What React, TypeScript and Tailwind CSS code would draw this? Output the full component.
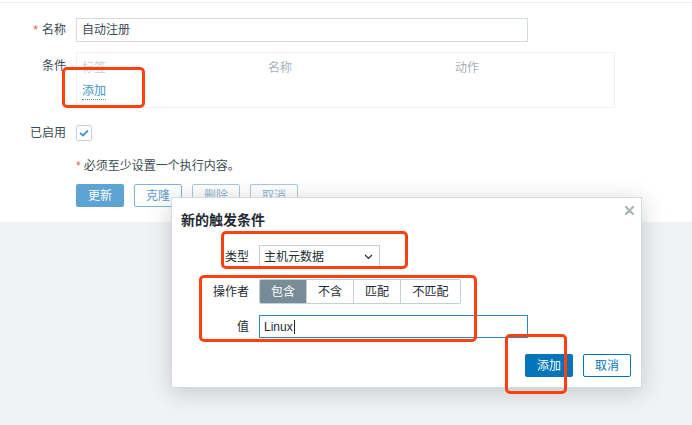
import React from "react";

const font = { fontFamily: '"Liberation Sans", "Noto Sans CJK SC", sans-serif' };

function Mark({ className }: { className: string }) {
  return <div className={`pointer-events-none absolute rounded-[5px] border-[3px] border-[#fe3f0f] ${className}`} />;
}

function Segment({ label, active, wide }: { label: string; active?: boolean; wide?: boolean }) {
  return (
    <div
      className={`flex h-[23px] items-center justify-center border-r border-[#c5d0d6] last:border-r-0 ${wide ? "w-[59px]" : "w-[47px]"} ${
        active ? "bg-[#768d99] text-white" : "bg-white text-[#1f2c33]"
      }`}
    >
      {label}
    </div>
  );
}

function NewConditionDialog() {
  return (
    <div className="absolute left-[171px] top-[197px] h-[191px] w-[471px] border border-[#d4dade] bg-white shadow-[0_4px_22px_rgba(40,50,60,0.22)]">
      <div className="flex items-start justify-between pl-[9px] pr-[7px] pt-[13px]">
        <h4 className="text-[14px] font-semibold leading-[18px] text-[#1f2c33]">新的触发条件</h4>
        <svg width="9" height="9" viewBox="0 0 9 9" className="mt-[-5px]">
          <path d="M1 1L8 8M8 1L1 8" stroke="#a9b4ba" strokeWidth="2.2" strokeLinecap="round" />
        </svg>
      </div>

      <div className="mt-[16px] grid grid-cols-[77px_1fr] items-center gap-x-[10px] gap-y-[11px] text-[12px] text-[#1f2c33]">
        <span className="text-right">类型</span>
        <div className="flex h-[23px] w-[121px] items-center justify-between border border-[#c5d0d6] bg-white pl-[4px] pr-[6px]">
          <span>主机元数据</span>
          <svg width="9" height="6" viewBox="0 0 9 6">
            <path d="M1 1L4.5 4.5L8 1" stroke="#1f2c33" strokeWidth="1.2" fill="none" />
          </svg>
        </div>

        <span className="text-right">操作者</span>
        <div className="flex w-fit overflow-hidden rounded-[2px] border border-[#c5d0d6]">
          <Segment label="包含" active />
          <Segment label="不含" />
          <Segment label="匹配" />
          <Segment label="不匹配" wide />
        </div>

        <span className="text-right">值</span>
        <div className="flex h-[23px] w-[269px] items-center border border-[#2f86c2] bg-white pl-[4px]">
          <span>Linux</span>
          <span className="ml-[1px] h-[14px] w-px bg-[#1f2c33]" />
        </div>
      </div>

      <div className="mt-[16px] flex justify-end gap-[10px] pr-[10px] text-[12px]">
        <button className="h-[23px] w-[48px] rounded-[2px] bg-[#0275b8] text-white">添加</button>
        <button className="h-[23px] w-[48px] rounded-[2px] border border-[#0275b8] bg-white text-[#0275b8]">取消</button>
      </div>
    </div>
  );
}

export default function App() {
  return (
    <div className="relative h-[425px] w-[692px] overflow-hidden bg-[#f1f2f4]" style={font}>
      <div className="bg-white pt-[2px]">
        <div className="h-[220px] border-t border-[#eceef0] pt-[15px]">
          <div className="grid grid-cols-[66px_1fr] gap-x-[10px] text-[12px] text-[#3a4a52]">
            <label className="flex h-[24px] items-center justify-end">
              <span className="mr-[4px] text-[#e45959]">*</span>名称
            </label>
            <div className="flex h-[24px] w-[452px] items-center border border-[#d3dbe0] px-[5px] text-[#3a4a52]">自动注册</div>

            <label className="mt-[10px] pt-[5px] text-right">条件</label>
            <div className="mt-[10px] h-[56px] w-[539px] border border-[#eef0f2] px-[5px] pt-[6px]">
              <div className="grid grid-cols-[186px_187px_1fr] text-[#a6b1b7]">
                <span className="text-[#c7cfd4]">标签</span>
                <span>名称</span>
                <span>动作</span>
              </div>
              <span className="mt-[6px] inline-block border-b border-dotted border-[#4796c4] leading-[16px] text-[#4796c4]">添加</span>
            </div>

            <label className="mt-[17px] flex h-[16px] items-center justify-end">已启用</label>
            <div className="mt-[17px] flex h-[16px] w-[16px] items-center justify-center rounded-[2px] border border-[#c5d0d6] bg-white">
              <svg width="10" height="8" viewBox="0 0 10 8">
                <path d="M1 4L4 6.5L9 1.5" stroke="#4796c4" strokeWidth="1.8" fill="none" />
              </svg>
            </div>

            <span />
            <p className="mt-[16px] text-[#3a4a52]">
              <span className="mr-[3px] text-[#e45959]">*</span>必须至少设置一个执行内容。
            </p>

            <span />
            <div className="mt-[9px] flex gap-[10px]">
              <button className="h-[23px] w-[48px] rounded-[2px] bg-[#5da3d3] text-white">更新</button>
              <button className="h-[23px] w-[48px] rounded-[2px] border border-[#7fb3d9] bg-white text-[#5d9bc9]">克隆</button>
              <button className="h-[23px] w-[48px] rounded-[2px] border border-[#a9cbe3] bg-white text-[#8fb6d4]">删除</button>
              <button className="h-[23px] w-[48px] rounded-[2px] border border-[#a9cbe3] bg-white text-[#8fb6d4]">取消</button>
            </div>
          </div>
        </div>
      </div>

      <NewConditionDialog />

      <Mark className="left-[62px] top-[67px] h-[41px] w-[83px]" />
      <Mark className="left-[221px] top-[231px] h-[38px] w-[187px]" />
      <Mark className="left-[199px] top-[275px] h-[67px] w-[278px]" />
      <Mark className="left-[505px] top-[334px] h-[60px] w-[62px]" />
    </div>
  );
}
